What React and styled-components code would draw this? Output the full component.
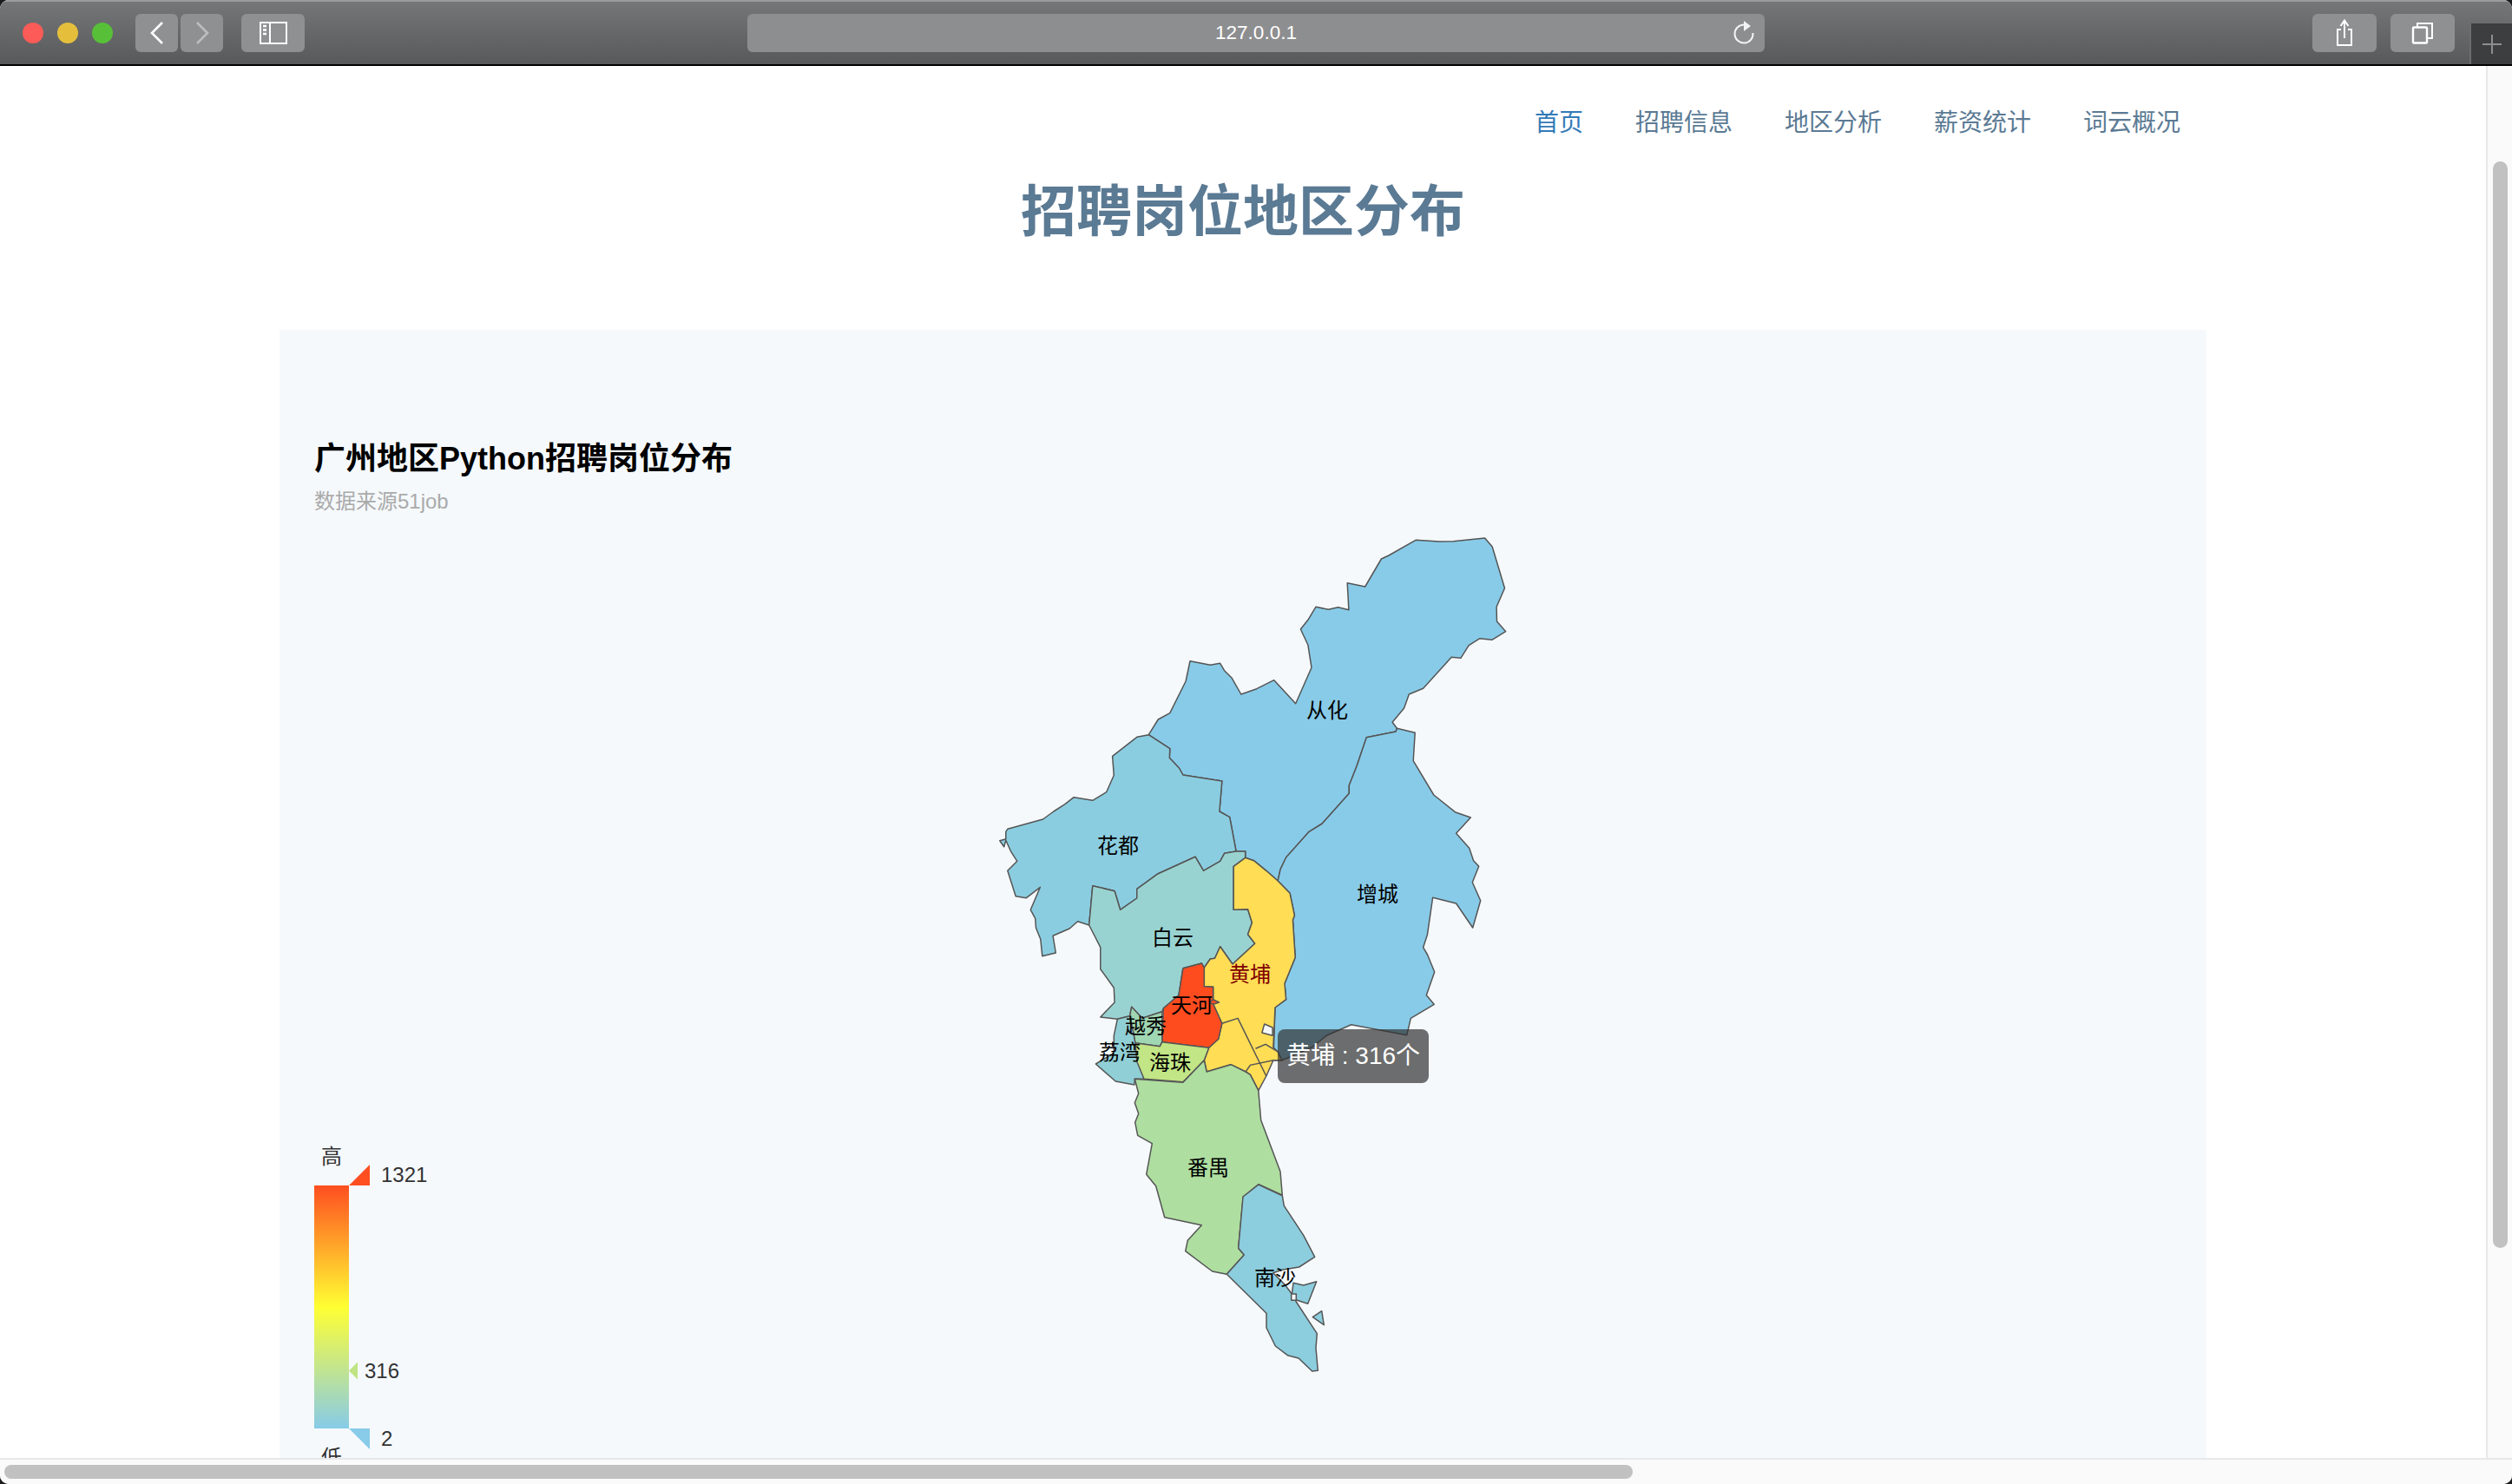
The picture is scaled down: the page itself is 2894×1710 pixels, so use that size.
import React from "react";
import styled, { createGlobalStyle } from "styled-components";

const SANS = `"Liberation Sans", "Noto Sans CJK SC", sans-serif`;

const GlobalStyle = createGlobalStyle`
  html, body { margin: 0; padding: 0; background: #1c1c1c; overflow: hidden; }
  body { font-family: ${SANS}; }
`;

/* ---------- map data: traced from the reference ---------- */
const z3 = (l) => l.map(([x, y]) => [1120 + x / 2.45, 600 + y / 3]);
const z4 = (l) => l.map(([x, y]) => [1120 + x / 2.45, 960 + y / 3]);
const z5 = (l) => l.map(([x, y]) => [1220 + x / 3, 1200 + y / 3]);
const z6 = (l) => l.map(([x, y]) => [1260 + x / 3, 1300 + y / 3]);
const str = (l) => l.map(([x, y]) => `${x.toFixed(1)},${y.toFixed(1)}`).join(" ");

const regions = [
  { name: "从化", fill: "#88cbe8", pts: [
    ...z3([[615,485],[672,499],[700,493],[712,518],[733,544],[759,600],[803,581],[852,551],[913,632],[958,508],[948,430],[927,375],[948,343],[970,298],[1006,307],[1033,299],[1063,308],[1059,215],[1109,228],[1155,132],[1176,120],[1252,67],[1318,72],[1358,71],[1447,60],[1468,90],[1503,233],[1480,298],[1481,348],[1506,383],[1467,412],[1433,407],[1402,431],[1379,475],[1353,472],[1273,580],[1233,600],[1219,648],[1186,697],[1199,718],[1196,729],[1113,749],[1085,850],[1064,915],[1064,943],[988,1047],[951,1075],[886,1165]]),
    ...z4([[870,125],[863,165],[830,130],[795,95],[771,85],[771,63],[745,63]]),
    ...z3([[727,1025],[698,1005],[705,900],[595,879],[584,855],[557,820],[558,788],[498,740],[525,687],[558,665],[603,555]]),
  ]},
  { name: "增城", fill: "#88cbe8", pts: [
    ...z3([[1196,729],[1199,718],[1250,733],[1245,830],[1303,948],[1363,1007],[1407,1026],[1366,1081],[1403,1132],[1415,1175]]),
    ...z4([[1430,115],[1412,170],[1435,233],[1413,327],[1366,243],[1300,223],[1285,350],[1273,395],[1285,420],[1305,480],[1282,560],[1304,592],[1238,640],[1227,698],[1070,662],[1000,700],[960,740],[875,785],[850,785],[855,603],[886,575],[882,520],[912,430],[905,300],[910,285],[897,208],[863,165],[870,125],[886,84]]),
    ...z3([[951,1075],[988,1047],[1064,943],[1064,915],[1085,850],[1113,749]]),
  ]},
  { name: "花都", fill: "#8bcde0", pts: [
    ...z3([[498,740],[465,748],[396,814],[400,880],[379,938],[340,967],[287,956],[262,980],[230,1005],[200,1032],[100,1066],[95,1075],[95,1100],[78,1106],[90,1127],[95,1105],[110,1145]]),
    ...z4([[127,97],[100,130],[123,218],[153,224],[192,187],[165,265],[178,295],[180,328],[193,367],[198,425],[236,414],[228,355],[275,330],[298,305],[330,318],[340,182],[402,200],[418,265],[465,225],[465,193],[525,140],[630,82],[653,130],[700,97],[712,70],[745,63]]),
    ...z3([[727,1025],[698,1005],[705,900],[595,879],[584,855],[557,820],[558,788]]),
  ]},
  { name: "白云", fill: "#99d3d1", pts: z4([[745,63],[771,63],[771,85],[738,115],[738,265],[778,263],[790,310],[778,350],[798,382],[735,453],[700,392],[685,433],[672,435],[655,465],[648,450],[595,467],[583,560],[540,605],[536,617],[480,640],[450,601],[445,632],[410,643],[362,636],[402,585],[400,535],[362,470],[362,395],[330,318],[340,182],[402,200],[418,265],[465,225],[465,193],[525,140],[630,82],[653,130],[700,97],[712,70]]) },
  { name: "黄埔", fill: "#ffdd55", pts: z4([[771,85],[795,95],[830,130],[863,165],[897,208],[910,285],[905,300],[912,430],[882,520],[886,575],[855,603],[850,740],[862,755],[875,785],[850,785],[830,840],[808,890],[785,835],[772,825],[730,800],[662,825],[655,785],[668,742],[695,712],[705,658],[680,590],[680,532],[655,530],[655,465],[672,435],[685,433],[700,392],[735,453],[798,382],[778,350],[790,310],[778,263],[738,265],[738,115]]) },
  { name: "天河", fill: "#ff4c1f", pts: z4([[595,467],[648,450],[655,465],[655,530],[680,532],[680,590],[705,658],[695,712],[668,742],[536,722],[540,605],[583,560]]) },
  { name: "越秀", fill: "#a0d7b3", pts: z4([[450,601],[480,640],[536,617],[536,722],[530,737],[460,725],[455,690],[445,632]]) },
  { name: "荔湾", fill: "#90cfd6", pts: z4([[410,643],[445,632],[455,690],[460,725],[473,780],[485,850],[459,850],[458,870],[405,858],[349,798],[400,760],[400,700]]) },
  { name: "海珠", fill: "#c2e585", pts: z4([[460,725],[530,737],[536,722],[668,742],[655,785],[595,860],[485,850],[465,790]]) },
  { name: "番禺", fill: "#aedea0", pts: [
    ...z4([[459,850],[595,862],[655,785],[662,825],[730,800],[772,825],[785,835],[808,890]]),
    ...z5([[698,272],[765,450],[772,532],[690,494],[637,537],[620,715],[640,738],[580,805],[530,795],[437,725],[445,688],[493,635],[365,608],[335,500],[302,460],[322,353],[272,325],[263,280],[275,250],[262,212],[275,180]]),
  ]},
  { name: "南沙", fill: "#8ccdde", pts: z6([[570,195],[652,233],[658,268],[725,370],[764,445],[710,480],[650,490],[620,500],[660,540],[690,580],[700,600],[772,710],[768,760],[775,838],[755,840],[708,795],[670,785],[628,753],[597,690],[597,640],[460,505],[520,438],[500,415],[516,237]]) },
  { name: "南沙岛", fill: "#8ccdde", pts: z6([[690,535],[725,543],[770,530],[740,607],[703,595],[685,575]]) },
  { name: "南沙礁", fill: "#8ccdde", pts: z6([[757,653],[788,632],[796,680]]) },
  { name: "空隙", fill: "#f5f9fc", pts: z4([[825,660],[848,672],[848,700],[818,690]]) },
  { name: "小块", fill: "#ff4c1f", pts: z4([[680,575],[697,585],[680,592],[670,585]]) },
  { name: "方块", fill: "#f5f9fc", pts: z6([[683,573],[700,573],[700,595],[683,595]]) },
];

const innerLines = [
  z4([[705,658],[750,640],[830,840]]),
  z4([[772,825],[785,802],[850,785]]),
  z4([[800,745],[828,730],[862,755]]),
];

const labels = [
  { t: "从化", x: 1529, y: 818 },
  { t: "花都", x: 1288, y: 974 },
  { t: "增城", x: 1587, y: 1030 },
  { t: "白云", x: 1351, y: 1080 },
  { t: "黄埔", x: 1440, y: 1122, hot: true },
  { t: "天河", x: 1373, y: 1158 },
  { t: "越秀", x: 1320, y: 1182 },
  { t: "荔湾", x: 1290, y: 1212 },
  { t: "海珠", x: 1348, y: 1224 },
  { t: "番禺", x: 1392, y: 1345 },
  { t: "南沙", x: 1469, y: 1472 },
];

/* ---------- browser chrome ---------- */
const Page = styled.div`
  width: 2894px;
  height: 1710px;
  background: #1c1c1c;
`;
const Win = styled.div`
  width: 100%;
  height: 100%;
  display: flex;
  flex-direction: column;
  border-radius: 10px;
  overflow: hidden;
  background: #fff;
`;
const Toolbar = styled.header`
  position: relative;
  flex: none;
  height: 76px;
  box-sizing: border-box;
  display: flex;
  align-items: flex-start;
  padding: 16px 0 0 26px;
  background: linear-gradient(#757678, #58595b);
  border-top: 2px solid #9b9c9d;
  border-bottom: 2px solid #000;
`;
const Lights = styled.div`
  display: flex;
  gap: 16px;
  margin-top: 8px;
`;
const Light = styled.span`
  width: 24px;
  height: 24px;
  border-radius: 50%;
  background: ${(p) => p.$c};
`;
const ToolBtn = styled.div`
  width: ${(p) => p.$w}px;
  height: 44px;
  margin-left: ${(p) => p.$ml}px;
  margin-top: -2px;
  flex: none;
  border-radius: 6px;
  background: #8f9092;
  display: flex;
  align-items: center;
  justify-content: center;
`;
const Address = styled.div`
  position: relative;
  flex: none;
  width: 1172px;
  height: 44px;
  margin-left: 510px;
  margin-top: -2px;
  border-radius: 6px;
  background: #8d8e90;
  color: #fff;
  font-size: 22.5px;
  line-height: 44px;
  text-align: center;
`;
const Reload = styled.svg`
  position: absolute;
  right: 12px;
  top: 7px;
`;
const NewTab = styled.div`
  position: absolute;
  right: 0;
  top: 23px;
  width: 49px;
  height: 49px;
  box-sizing: border-box;
  background: #3d3e3f;
  border: 2px solid #6c6d6e;
  border-width: 2px 0 0 2px;
  display: flex;
  align-items: center;
  justify-content: center;
`;

const Middle = styled.div`
  flex: 1;
  min-height: 0;
  display: flex;
`;
const Content = styled.main`
  flex: 1;
  min-width: 0;
  overflow: hidden;
  background: #fff;
`;
const VBar = styled.div`
  flex: none;
  width: 30px;
  box-sizing: border-box;
  background: #fafafa;
  border-left: 2px solid #e8e8e8;
  padding: 110px 5px 0 6px;
`;
const VThumb = styled.div`
  width: 17px;
  height: 1252px;
  border-radius: 9px;
  background: #c1c1c1;
`;
const HBar = styled.div`
  flex: none;
  height: 30px;
  box-sizing: border-box;
  background: #fafafa;
  border-top: 2px solid #e8e8e8;
  padding: 6px 0 0 5px;
`;
const HThumb = styled.div`
  width: 1876px;
  height: 16px;
  border-radius: 8px;
  background: #c1c1c1;
`;

/* ---------- page ---------- */
const Container = styled.div`
  width: 2220px;
  margin: 0 auto;
`;
const Nav = styled.nav`
  display: flex;
  justify-content: flex-end;
  padding-top: 42px;
`;
const NavItem = styled.a`
  padding: 0 30px;
  font-size: 28px;
  line-height: 48px;
  color: ${(p) => (p.$active ? "#337ab7" : "#5b7a94")};
`;
const Title = styled.h1`
  margin: 38px 0 96px;
  text-align: center;
  font-size: 64px;
  line-height: 80px;
  font-weight: 700;
  color: #5b7a94;
`;
const Panel = styled.section`
  background: #f5f9fc;
  height: 1300px;
  padding-top: 124px;
`;
const ChartTitle = styled.h2`
  margin: 0 0 6px;
  padding-left: 40px;
  font-size: 36px;
  line-height: 50px;
  font-weight: 700;
  color: #000;
`;
const ChartSub = styled.p`
  margin: 0 0 4px;
  padding-left: 40px;
  font-size: 24px;
  line-height: 36px;
  color: #aaa;
`;
const Chart = styled.div`
  position: relative;
  width: 2220px;
  height: 1080px;
`;
const ChartSvg = styled.svg`
  display: block;
`;
const Region = styled.polygon`
  stroke: #555;
  stroke-width: 1.5;
  stroke-linejoin: round;
`;
const InnerLine = styled.polyline`
  fill: none;
  stroke: #555;
  stroke-width: 1.5;
`;
const MapLabel = styled.text`
  font-family: ${SANS};
  font-size: 24px;
  text-anchor: middle;
  dominant-baseline: central;
  fill: ${(p) => (p.$hot ? "#800000" : "#000")};
`;
const LegendText = styled.text`
  font-family: ${SANS};
  font-size: 24px;
  fill: #333;
  dominant-baseline: central;
  text-anchor: ${(p) => p.$anchor || "start"};
`;
const Tooltip = styled.div`
  position: absolute;
  left: 1150px;
  top: 586px;
  height: 62px;
  box-sizing: border-box;
  padding: 0 10px;
  border-radius: 8px;
  background: rgba(50, 50, 50, 0.7);
  color: #fff;
  font-size: 28px;
  line-height: 62px;
  white-space: nowrap;
`;

export default function App() {
  return (
    <Page>
      <GlobalStyle />
      <Win>
        <Toolbar>
          <Lights>
            <Light $c="#fc5b57" />
            <Light $c="#e5bf3c" />
            <Light $c="#57c038" />
          </Lights>
          <ToolBtn $w={49} $ml={26}>
            <svg width="20" height="28" viewBox="0 0 20 28">
              <path d="M16 2 L4 14 L16 26" fill="none" stroke="#fff" strokeWidth="2.6" />
            </svg>
          </ToolBtn>
          <ToolBtn $w={49} $ml={3}>
            <svg width="20" height="28" viewBox="0 0 20 28">
              <path d="M4 2 L16 14 L4 26" fill="none" stroke="#bcbdbe" strokeWidth="2.6" />
            </svg>
          </ToolBtn>
          <ToolBtn $w={73} $ml={21}>
            <svg width="32" height="26" viewBox="0 0 32 26">
              <rect x="1" y="1" width="30" height="24" fill="none" stroke="#fff" strokeWidth="2" />
              <path d="M12 1 V25" stroke="#fff" strokeWidth="2" />
              <path d="M4 5 h4 M4 9.5 h4 M4 14 h4" stroke="#fff" strokeWidth="2.4" />
            </svg>
          </ToolBtn>
          <Address>
            127.0.0.1
            <Reload width="24" height="30" viewBox="0 0 24 30">
              <path d="M12 5.5 A10.5 10.5 0 1 0 22.5 15" fill="none" stroke="#f2f2f2" strokeWidth="2" />
              <path d="M12 1 L20 7 L12 13 Z" fill="#f2f2f2" />
            </Reload>
          </Address>
          <ToolBtn $w={74} $ml={631}>
            <svg width="24" height="32" viewBox="0 0 24 32">
              <path d="M8 12 H4 V30 H20 V12 H16" fill="none" stroke="#fff" strokeWidth="2" />
              <path d="M12 22 V2 M7.5 8 L12 1.5 L16.5 8" fill="none" stroke="#fff" strokeWidth="2" />
            </svg>
          </ToolBtn>
          <ToolBtn $w={74} $ml={16}>
            <svg width="26" height="26" viewBox="0 0 26 26">
              <rect x="2" y="6.5" width="16" height="18" rx="1" fill="none" stroke="#fff" strokeWidth="2.4" />
              <path d="M7 6 V2 H24 V19 H19" fill="none" stroke="#fff" strokeWidth="2" />
            </svg>
          </ToolBtn>
          <NewTab>
            <svg width="24" height="24" viewBox="0 0 24 24">
              <path d="M12 1 V23 M1 12 H23" stroke="#8d8e8f" strokeWidth="2" />
            </svg>
          </NewTab>
        </Toolbar>

        <Middle>
          <Content>
            <Container>
              <Nav>
                <NavItem $active>首页</NavItem>
                <NavItem>招聘信息</NavItem>
                <NavItem>地区分析</NavItem>
                <NavItem>薪资统计</NavItem>
                <NavItem>词云概况</NavItem>
              </Nav>
              <Title>招聘岗位地区分布</Title>
              <Panel>
                <ChartTitle>广州地区Python招聘岗位分布</ChartTitle>
                <ChartSub>数据来源51job</ChartSub>
                <Chart>
                  <ChartSvg width="2220" height="1080" viewBox="322 600 2220 1080">
                    <defs>
                      <linearGradient id="scale" x1="0" y1="0" x2="0" y2="1">
                        <stop offset="0" stopColor="#ff4e20" />
                        <stop offset="0.5" stopColor="#ffff33" />
                        <stop offset="1" stopColor="#87cbe8" />
                      </linearGradient>
                    </defs>
                    {regions.map((r) => (
                      <Region key={r.name} points={str(r.pts)} fill={r.fill} />
                    ))}
                    {innerLines.map((l, i) => (
                      <InnerLine key={i} points={str(l)} />
                    ))}
                    {labels.map((l) => (
                      <MapLabel key={l.t} x={l.x} y={l.y} $hot={l.hot}>
                        {l.t}
                      </MapLabel>
                    ))}
                    <rect x="362" y="1366" width="40" height="280" fill="url(#scale)" />
                    <polygon points="402,1366 426,1366 426,1342" fill="#ff4e20" />
                    <polygon points="402,1579.5 412,1569.5 412,1589.5" fill="#c0e483" />
                    <polygon points="402,1646 426,1646 426,1670" fill="#87cbe8" />
                    <LegendText x="382" y="1332" $anchor="middle">高</LegendText>
                    <LegendText x="382" y="1679" $anchor="middle">低</LegendText>
                    <LegendText x="439" y="1353">1321</LegendText>
                    <LegendText x="420" y="1579">316</LegendText>
                    <LegendText x="439" y="1657">2</LegendText>
                  </ChartSvg>
                  <Tooltip>黄埔 : 316个</Tooltip>
                </Chart>
              </Panel>
            </Container>
          </Content>
          <VBar>
            <VThumb />
          </VBar>
        </Middle>
        <HBar>
          <HThumb />
        </HBar>
      </Win>
    </Page>
  );
}
